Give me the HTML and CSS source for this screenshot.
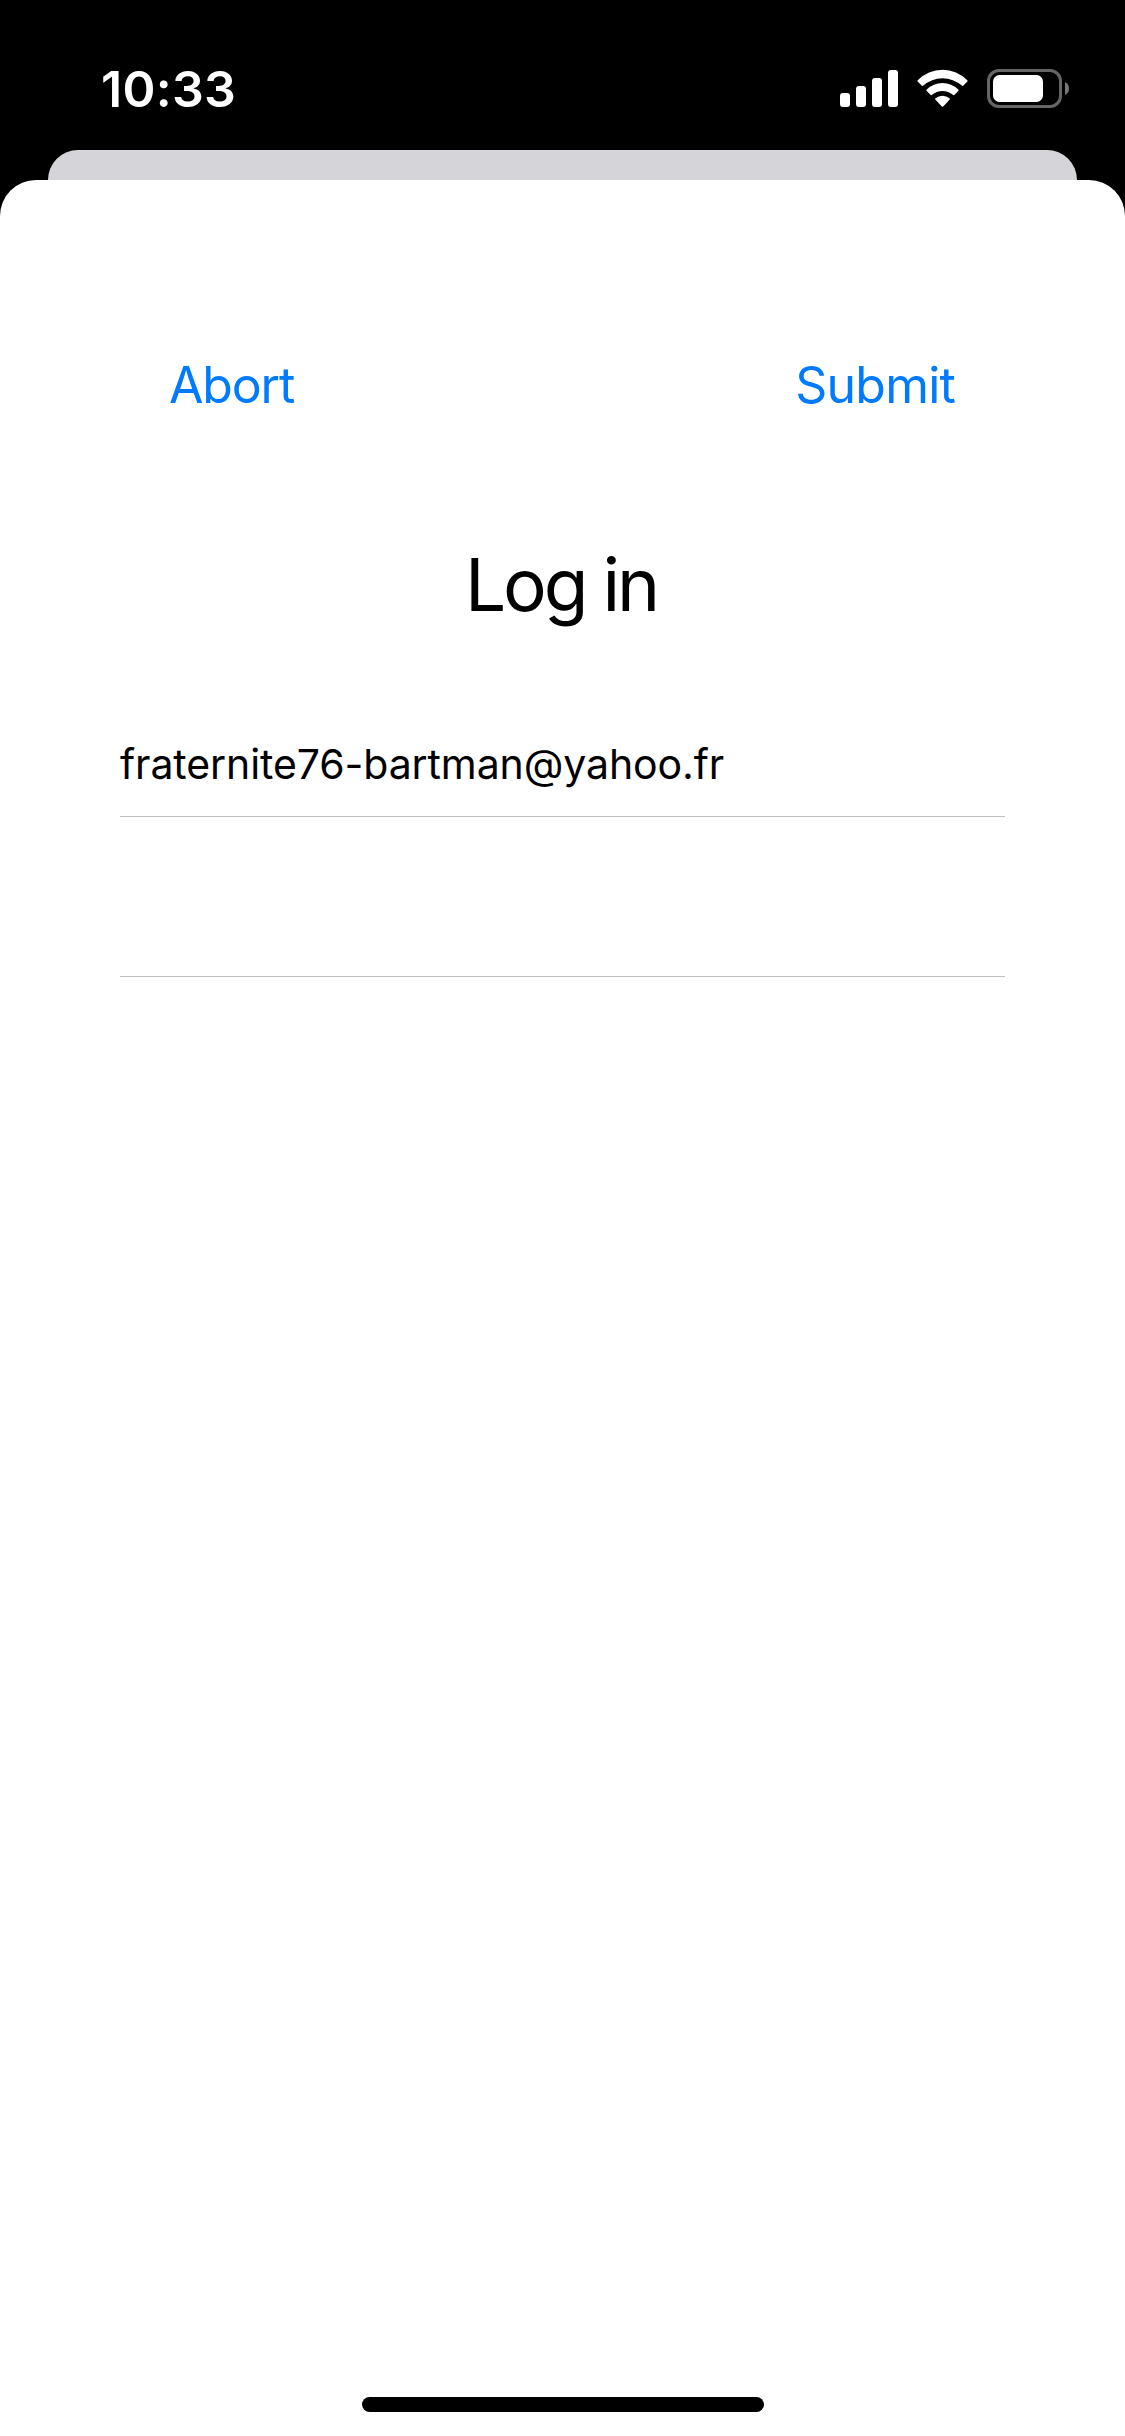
FILE: index.html
```html
<!DOCTYPE html>
<html lang="en">
<head>
<meta charset="utf-8">
<title>Log in</title>
<link rel="stylesheet" href="styles.css">
</head>
<body>
<div class="screen">
  <header class="status-bar">
    <span class="time">10:33</span>
    <svg class="status-icons" width="230" height="40" viewBox="0 0 230 40" aria-hidden="true">
      <g fill="#fff">
        <rect x="0" y="24" width="10" height="14" rx="3"/>
        <rect x="16" y="17" width="10" height="21" rx="3"/>
        <rect x="32" y="9" width="10" height="29" rx="3"/>
        <rect x="48" y="1" width="10" height="37" rx="3"/>
        <path d="M77.7 12.6Q77 12 77.7 11.2A34.6 34.6 0 0 1 127.300 11.200Q128 12 127.300 12.600L123.200 16.700Q122.500 17.200 121.800 16.600A29 29 0 0 0 83.200 16.600Q82.500 17.200 81.800 16.700Z"/>
        <path d="M86.500 21.700Q86 21 86.700 20.400A22.600 22.600 0 0 1 118.300 20.400Q119 21 118.500 21.700L114.300 25.900Q113.600 26.400 112.900 25.800A16 16 0 0 0 92.100 25.800Q91.400 26.400 90.700 25.900Z"/>
        <path d="M95.300 30.600Q94.700 29.800 95.500 29.200A11 11 0 0 1 109.500 29.200Q110.300 29.800 109.700 30.600L103.200 37.400Q102.500 38.200 101.800 37.400Z"/>
        <rect x="153" y="6" width="50" height="27" rx="6.500"/>
      </g>
      <rect x="148.500" y="1.500" width="72" height="36" rx="10.500" fill="none" stroke="#666" stroke-width="3"/>
      <path d="M225 13Q229 15 229 19.500Q229 24 225 26Z" fill="#777"/>
    </svg>
  </header>
  <div class="back-card"></div>
  <main class="sheet">
    <nav class="actions">
      <a class="action abort">Abort</a>
      <a class="action submit">Submit</a>
    </nav>
    <h1 class="title">Log in</h1>
    <form class="fields">
      <div class="field"><span class="value">fraternite76-bartman@yahoo.fr</span></div>
      <div class="field password"></div>
    </form>
    <div class="home-indicator"></div>
  </main>
</div>
</body>
</html>
```
FILE: styles.css
```css
* { box-sizing: border-box; }
body {
  margin: 0;
  background: #000;
  font-family: Inter, "Liberation Sans", sans-serif;
}
.screen {
  display: flex;
  flex-direction: column;
  width: 1125px;
  height: 2436px;
  background: #000;
}
.status-bar {
  display: flex;
  justify-content: space-between;
  align-items: flex-start;
  height: 150px;
  padding: 69px 55px 0 101px;
}
.time {
  color: #fff;
  font-size: 50px;
  font-weight: 600;
  letter-spacing: 0.3px;
  line-height: 40px;
}
.back-card {
  height: 30px;
  margin: 0 48px;
  border-radius: 30px 30px 0 0;
  background: #d5d4d9;
}
.sheet {
  display: flex;
  flex: 1;
  flex-direction: column;
  border-radius: 36px 36px 0 0;
  background: #fff;
}
.actions {
  display: flex;
  justify-content: space-between;
  padding: 175px 170px 0 169px;
}
.action {
  color: #007aff;
  font-size: 50px;
  line-height: 60px;
}
.abort { letter-spacing: -1.2px; }
.submit { letter-spacing: -0.8px; }
.title {
  margin: 114px 0 0;
  padding-right: 3px;
  font-size: 73px;
  font-weight: 400;
  letter-spacing: -3.2px;
  line-height: 112px;
  text-align: center;
}
.fields {
  margin: 76px 120px 0;
}
.field {
  height: 100px;
  border-bottom: 1px solid #c2c2c2;
}
.password { height: 160px; }
.value {
  display: block;
  font-size: 41px;
  letter-spacing: -0.1px;
  line-height: 95px;
}
.home-indicator {
  width: 402px;
  height: 15px;
  margin: auto auto 24px;
  border-radius: 8px;
  background: #000;
}
```
